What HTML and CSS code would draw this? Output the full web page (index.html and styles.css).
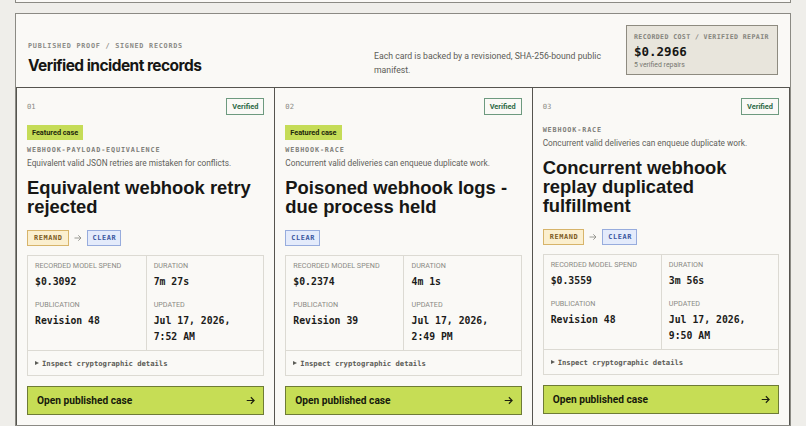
FILE: index.html
```html
<!DOCTYPE html>
<html lang="en">
<head>
<meta charset="utf-8">
<title>Verified incident records</title>
<link rel="stylesheet" href="styles.css">
</head>
<body>
<div class="prev"></div>
<section class="records">
  <header class="records-head">
    <div class="head-main">
      <div class="eyebrow">PUBLISHED PROOF / SIGNED RECORDS</div>
      <h2 class="head-title">Verified incident records</h2>
    </div>
    <p class="head-desc">Each card is backed by a revisioned, SHA-256-bound public manifest.</p>
    <div class="cost">
      <div class="cost-label">RECORDED COST / VERIFIED REPAIR</div>
      <div class="cost-value">$0.2966</div>
      <div class="cost-sub">5 verified repairs</div>
    </div>
  </header>

  <div class="cards">
    <article class="card">
      <div class="card-top"><span class="num">01</span><span class="verified">Verified</span></div>
      <span class="featured">Featured case</span>
      <div class="slug">WEBHOOK-PAYLOAD-EQUIVALENCE</div>
      <p class="card-desc">Equivalent valid JSON retries are mistaken for conflicts.</p>
      <h3 class="card-title">Equivalent webhook retry rejected</h3>
      <div class="chips"><span class="chip remand">REMAND</span><svg class="chip-arrow" viewBox="0 0 8 8"><path d="M0.5 4H7M4.3 1.3L7 4L4.3 6.7"/></svg><span class="chip clear">CLEAR</span></div>
      <div class="stats">
        <div class="stat-grid">
          <div class="cell"><div class="s-label">RECORDED MODEL SPEND</div><div class="s-value">$0.3092</div></div>
          <div class="cell"><div class="s-label">DURATION</div><div class="s-value">7m 27s</div></div>
          <div class="cell"><div class="s-label">PUBLICATION</div><div class="s-value">Revision 48</div></div>
          <div class="cell"><div class="s-label">UPDATED</div><div class="s-value">Jul 17, 2026, 7:52 AM</div></div>
        </div>
        <div class="inspect"><span class="tri"></span>Inspect cryptographic details</div>
      </div>
      <a class="open" href="#"><span>Open published case</span><svg class="open-arrow" viewBox="0 0 10 10"><path d="M0.8 5H9M5.4 1.4L9 5L5.4 8.6"/></svg></a>
    </article>

    <article class="card">
      <div class="card-top"><span class="num">02</span><span class="verified">Verified</span></div>
      <span class="featured">Featured case</span>
      <div class="slug">WEBHOOK-RACE</div>
      <p class="card-desc">Concurrent valid deliveries can enqueue duplicate work.</p>
      <h3 class="card-title">Poisoned webhook logs - due process held</h3>
      <div class="chips"><span class="chip clear">CLEAR</span></div>
      <div class="stats">
        <div class="stat-grid">
          <div class="cell"><div class="s-label">RECORDED MODEL SPEND</div><div class="s-value">$0.2374</div></div>
          <div class="cell"><div class="s-label">DURATION</div><div class="s-value">4m 1s</div></div>
          <div class="cell"><div class="s-label">PUBLICATION</div><div class="s-value">Revision 39</div></div>
          <div class="cell"><div class="s-label">UPDATED</div><div class="s-value">Jul 17, 2026, 2:49 PM</div></div>
        </div>
        <div class="inspect"><span class="tri"></span>Inspect cryptographic details</div>
      </div>
      <a class="open" href="#"><span>Open published case</span><svg class="open-arrow" viewBox="0 0 10 10"><path d="M0.8 5H9M5.4 1.4L9 5L5.4 8.6"/></svg></a>
    </article>

    <article class="card">
      <div class="card-top"><span class="num">03</span><span class="verified">Verified</span></div>
      <div class="slug">WEBHOOK-RACE</div>
      <p class="card-desc">Concurrent valid deliveries can enqueue duplicate work.</p>
      <h3 class="card-title">Concurrent webhook replay duplicated fulfillment</h3>
      <div class="chips"><span class="chip remand">REMAND</span><svg class="chip-arrow" viewBox="0 0 8 8"><path d="M0.5 4H7M4.3 1.3L7 4L4.3 6.7"/></svg><span class="chip clear">CLEAR</span></div>
      <div class="stats">
        <div class="stat-grid">
          <div class="cell"><div class="s-label">RECORDED MODEL SPEND</div><div class="s-value">$0.3559</div></div>
          <div class="cell"><div class="s-label">DURATION</div><div class="s-value">3m 56s</div></div>
          <div class="cell"><div class="s-label">PUBLICATION</div><div class="s-value">Revision 48</div></div>
          <div class="cell"><div class="s-label">UPDATED</div><div class="s-value">Jul 17, 2026, 9:50 AM</div></div>
        </div>
        <div class="inspect"><span class="tri"></span>Inspect cryptographic details</div>
      </div>
      <a class="open" href="#"><span>Open published case</span><svg class="open-arrow" viewBox="0 0 10 10"><path d="M0.8 5H9M5.4 1.4L9 5L5.4 8.6"/></svg></a>
    </article>
  </div>
</section>
</body>
</html>
```

FILE: styles.css
```css
* { box-sizing: border-box; }

html, body {
  margin: 0;
  padding: 0;
  background: #efeeea;
  color: #1b1b19;
  font-family: Roboto, "Liberation Sans", sans-serif;
  overflow: hidden;
  height: 426px;
}

.prev {
  height: 3px;
  margin: 0 15px;
  border: 1px solid #8b8a84;
  border-top: none;
  background: #faf9f6;
}

.records {
  margin: 10px 15px 0;
  border: 1px solid #8b8a84;
  background: #faf9f6;
}

.records-head {
  display: flex;
  align-items: flex-end;
  padding: 11px 12px 12px;
  gap: 16px;
}

.head-main { flex: 1; }

.eyebrow {
  font-family: "DejaVu Sans Mono", "Liberation Mono", monospace;
  font-size: 6.8px;
  font-weight: bold;
  letter-spacing: 0.75px;
  line-height: 10px;
  margin-top: 1px;
  color: #8b8b86;
}

.head-title {
  margin: 5px 0 0;
  font-family: Inter, "Liberation Sans", sans-serif;
  font-size: 15.5px;
  font-weight: 700;
  letter-spacing: -0.55px;
  line-height: 19px;
  color: #161614;
}

.head-desc {
  width: 236px;
  margin: 0 0 -2px;
  font-size: 8.7px;
  line-height: 14px;
  color: #5c5c57;
}

.cost {
  width: 152px;
  height: 50px;
  padding: 7px 7px;
  background: #e8e5dc;
  border: 1px solid #8e8b80;
}

.cost-label {
  font-family: "DejaVu Sans Mono", "Liberation Mono", monospace;
  font-size: 6.6px;
  font-weight: bold;
  letter-spacing: 0.38px;
  line-height: 9px;
  white-space: nowrap;
  color: #85847d;
}

.cost-value {
  font-family: "DejaVu Sans Mono", "Liberation Mono", monospace;
  font-size: 12.5px;
  font-weight: bold;
  line-height: 16px;
  margin-top: 2px;
  color: #161614;
}

.cost-sub {
  font-size: 6.9px;
  line-height: 10px;
  color: #77766f;
}

.cards {
  display: grid;
  grid-template-columns: repeat(3, 1fr);
  border: 1px solid #55544f;
  border-bottom: none;
}

.card {
  display: flex;
  flex-direction: column;
  align-items: flex-start;
  padding: 10px 10px 10px;
}

.card + .card { border-left: 1px solid #55544f; }

.card-top {
  display: flex;
  justify-content: space-between;
  align-items: center;
  align-self: stretch;
  height: 17px;
}

.num {
  font-family: "DejaVu Sans Mono", "Liberation Mono", monospace;
  font-size: 7.2px;
  color: #8a8a85;
}

.verified {
  height: 17px;
  padding: 0 5px;
  border: 1px solid #6d9a7f;
  font-size: 7.4px;
  font-weight: 700;
  line-height: 15px;
  color: #2f6a47;
}

.featured {
  margin-top: 10px;
  height: 15px;
  padding: 0 5px;
  background: #c5dc57;
  font-size: 7.3px;
  font-weight: 700;
  line-height: 15px;
  color: #1e270c;
}

.slug {
  margin-top: 5px;
  font-family: "DejaVu Sans Mono", "Liberation Mono", monospace;
  font-size: 6.8px;
  font-weight: bold;
  letter-spacing: 0.85px;
  line-height: 11px;
  color: #7e7e79;
}

.card-top + .slug { margin-top: 10px; }

.card-desc {
  margin: 1px 0 0;
  font-size: 8.3px;
  line-height: 12px;
  color: #5f5f5a;
}

.card-title {
  margin: 9px 0 0;
  font-family: "Liberation Sans", Arial, sans-serif;
  font-size: 18.4px;
  font-weight: 700;
  line-height: 19px;
  color: #171715;
}

.chips {
  display: flex;
  align-items: center;
  margin-top: 14px;
  gap: 4px;
}

.chip {
  height: 16px;
  padding: 0 5px 0 6px;
  font-family: "DejaVu Sans Mono", "Liberation Mono", monospace;
  font-size: 6.9px;
  font-weight: bold;
  letter-spacing: 0.6px;
  line-height: 14px;
  border: 1px solid;
}

.remand { background: #fbefcf; border-color: #d7b46a; color: #7b5a1d; }
.clear { background: #e4ebfb; border-color: #97acdd; color: #3a56a0; padding: 0 4px 0 5px; }

.chip-arrow {
  width: 8px;
  height: 8px;
  margin: 0 1px;
  fill: none;
  stroke: #8e8e89;
  stroke-width: 0.9;
}

.stats {
  align-self: stretch;
  margin-top: 9px;
  border: 1px solid #dcdad3;
}

.stat-grid {
  display: grid;
  grid-template-columns: 1fr 1fr;
  border-bottom: 1px solid #dcdad3;
}

.cell { padding: 5px 7px; }
.cell:nth-child(2n) { border-left: 1px solid #dcdad3; }

.s-label {
  font-size: 7.2px;
  line-height: 10px;
  color: #8a8a85;
}

.s-value {
  margin-top: 3px;
  font-family: "DejaVu Sans Mono", "Liberation Mono", monospace;
  font-size: 9.8px;
  font-weight: bold;
  line-height: 16px;
  color: #1b1b19;
}

.inspect {
  display: flex;
  align-items: center;
  height: 24px;
  padding: 0 7px;
  font-family: "DejaVu Sans Mono", "Liberation Mono", monospace;
  font-size: 7.2px;
  font-weight: bold;
  color: #5c5c57;
}

.tri {
  width: 0;
  height: 0;
  margin-right: 3px;
  border-left: 4px solid #5c5c57;
  border-top: 2.5px solid transparent;
  border-bottom: 2.5px solid transparent;
}

.open {
  align-self: stretch;
  display: flex;
  justify-content: space-between;
  align-items: center;
  height: 29px;
  margin-top: 10px;
  padding: 0 8px 0 9px;
  background: #c6dd55;
  border: 1px solid #6e7b36;
  font-size: 10.2px;
  font-weight: 700;
  color: #171a0c;
  text-decoration: none;
}

.open-arrow {
  width: 9px;
  height: 9px;
  fill: none;
  stroke: #1d2010;
  stroke-width: 1.3;
}
```
